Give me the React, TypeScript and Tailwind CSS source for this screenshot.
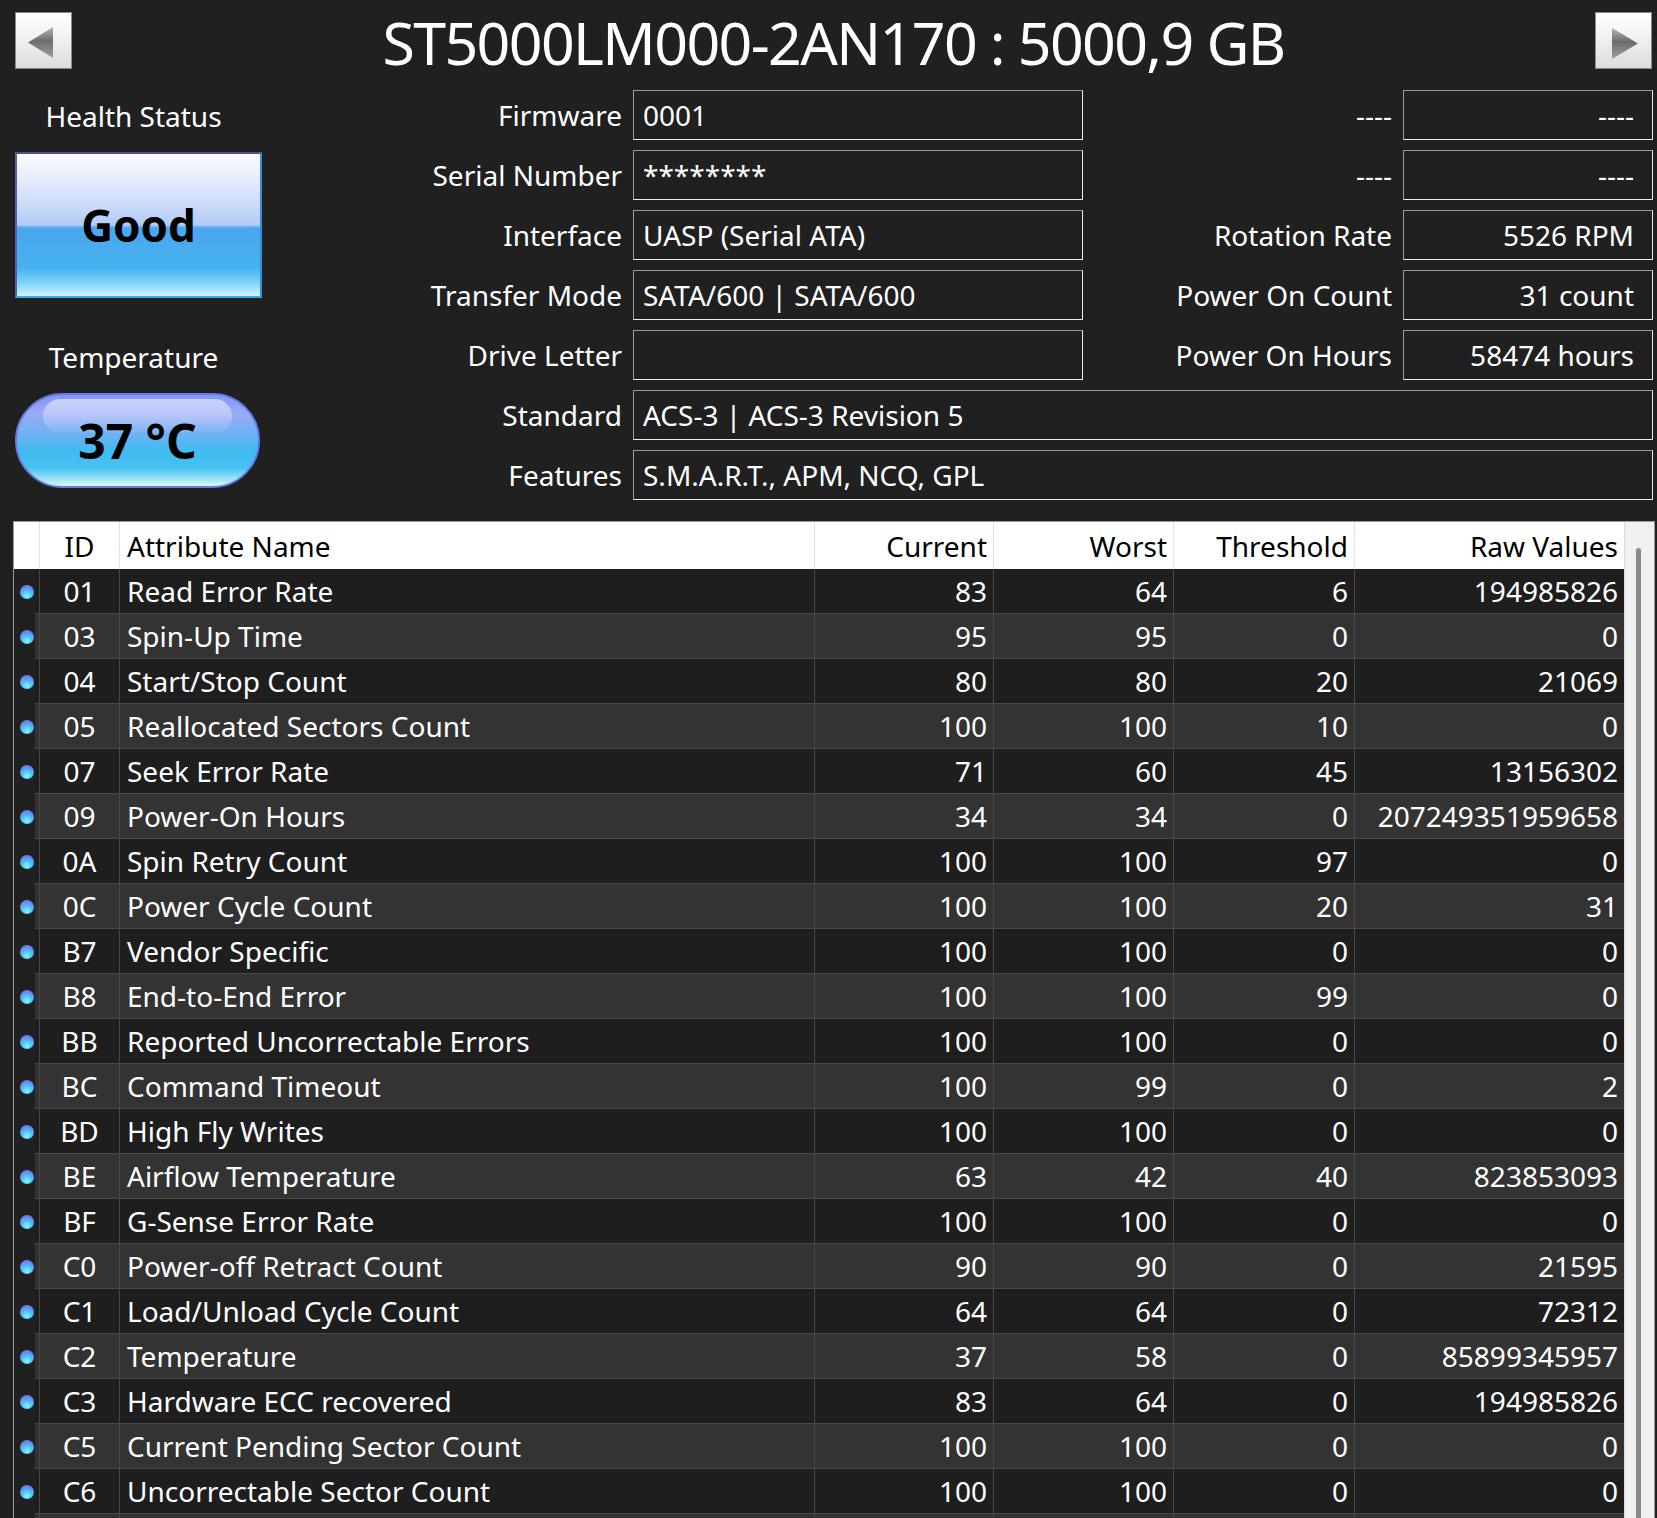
import React from "react";

type Attr = { id: string; name: string; cur: string; worst: string; thr: string; raw: string };

const attrs: Attr[] = [
  { id: "01", name: "Read Error Rate", cur: "83", worst: "64", thr: "6", raw: "194985826" },
  { id: "03", name: "Spin-Up Time", cur: "95", worst: "95", thr: "0", raw: "0" },
  { id: "04", name: "Start/Stop Count", cur: "80", worst: "80", thr: "20", raw: "21069" },
  { id: "05", name: "Reallocated Sectors Count", cur: "100", worst: "100", thr: "10", raw: "0" },
  { id: "07", name: "Seek Error Rate", cur: "71", worst: "60", thr: "45", raw: "13156302" },
  { id: "09", name: "Power-On Hours", cur: "34", worst: "34", thr: "0", raw: "207249351959658" },
  { id: "0A", name: "Spin Retry Count", cur: "100", worst: "100", thr: "97", raw: "0" },
  { id: "0C", name: "Power Cycle Count", cur: "100", worst: "100", thr: "20", raw: "31" },
  { id: "B7", name: "Vendor Specific", cur: "100", worst: "100", thr: "0", raw: "0" },
  { id: "B8", name: "End-to-End Error", cur: "100", worst: "100", thr: "99", raw: "0" },
  { id: "BB", name: "Reported Uncorrectable Errors", cur: "100", worst: "100", thr: "0", raw: "0" },
  { id: "BC", name: "Command Timeout", cur: "100", worst: "99", thr: "0", raw: "2" },
  { id: "BD", name: "High Fly Writes", cur: "100", worst: "100", thr: "0", raw: "0" },
  { id: "BE", name: "Airflow Temperature", cur: "63", worst: "42", thr: "40", raw: "823853093" },
  { id: "BF", name: "G-Sense Error Rate", cur: "100", worst: "100", thr: "0", raw: "0" },
  { id: "C0", name: "Power-off Retract Count", cur: "90", worst: "90", thr: "0", raw: "21595" },
  { id: "C1", name: "Load/Unload Cycle Count", cur: "64", worst: "64", thr: "0", raw: "72312" },
  { id: "C2", name: "Temperature", cur: "37", worst: "58", thr: "0", raw: "85899345957" },
  { id: "C3", name: "Hardware ECC recovered", cur: "83", worst: "64", thr: "0", raw: "194985826" },
  { id: "C5", name: "Current Pending Sector Count", cur: "100", worst: "100", thr: "0", raw: "0" },
  { id: "C6", name: "Uncorrectable Sector Count", cur: "100", worst: "100", thr: "0", raw: "0" },
  // next row is only a sliver at the bottom edge
  { id: "", name: "", cur: "", worst: "", thr: "", raw: "" },
];

function ArrowButton({ dir }: { dir: "left" | "right" }) {
  const gid = `tri-${dir}`;
  return (
    <button className="w-[57px] h-[57px] border border-[#8a8a8a] bg-[linear-gradient(180deg,#ffffff_0%,#f3f3f3_40%,#dcdcdc_100%)] flex items-center justify-center">
      <svg width="55" height="55" viewBox="0 0 55 55">
        <defs>
          <linearGradient id={gid} x1="0" y1="0" x2="0" y2="1">
            <stop offset="0" stopColor="#b4b4b4" />
            <stop offset="0.45" stopColor="#6c6c6c" />
            <stop offset="1" stopColor="#a0a0a0" />
          </linearGradient>
        </defs>
        {dir === "left" ? (
          <polygon points="12,29.5 37,14 37,45" fill={`url(#${gid})`} />
        ) : (
          <polygon points="16,15 16,46 42,30.5" fill={`url(#${gid})`} />
        )}
      </svg>
    </button>
  );
}

function Field({ value, right }: { value: string; right?: boolean }) {
  return (
    <div
      className={`h-[50px] border border-t-[#9a9a9a] border-l-[#9a9a9a] border-b-[#ececec] border-r-[#ececec] flex items-center ${
        right ? "justify-end pr-[18px]" : "pl-[9px]"
      }`}
    >
      {value}
    </div>
  );
}

function Label({ text }: { text: string }) {
  return <div className="h-[50px] flex items-center justify-end">{text}</div>;
}

function Bullet() {
  return (
    <div className="ml-[6px] w-[14px] h-[14px] rounded-full bg-[radial-gradient(circle_at_50%_78%,#8af4ff_0%,#4cc4fb_38%,#6a80f2_72%,#7b68e2_100%)]" />
  );
}

export default function App() {
  return (
    <div className="w-[1657px] h-[1518px] overflow-hidden bg-[#202020] text-white font-['Noto_Sans',sans-serif] text-[28px] leading-[38px]">
      {/* header */}
      <div className="h-[90px] flex items-start">
        <div className="mt-[12px] ml-[15px]">
          <ArrowButton dir="left" />
        </div>
        <div className="flex-1 text-center mt-[6px] text-[59px] leading-[72px] tracking-[-1.6px]">ST5000LM000-2AN170 : 5000,9 GB</div>
        <div className="mt-[12px] mr-[5px]">
          <ArrowButton dir="right" />
        </div>
      </div>

      {/* info */}
      <div className="flex">
        <div className="ml-[15px] w-[247px] flex flex-col">
          <div className="mt-[7px] w-[237px] text-center">Health Status</div>
          <div className="mt-[17px] h-[146px] w-[247px] border-2 border-t-[#4b4d9e] border-l-[#4a62b8] border-r-[#3c8ed0] border-b-[#38aee0] bg-[linear-gradient(180deg,#fbfbff_0%,#e2e8fc_22%,#b3cbf7_50%,#4ba6ee_52%,#45b2ee_80%,#82d4f6_91%,#d2f3fd_100%)] flex items-center justify-center">
            <span className="text-black font-bold text-[44px] leading-[50px]">Good</span>
          </div>
          <div className="mt-[40px] w-[237px] text-center">Temperature</div>
          <div className="mt-[17px] relative h-[95px] w-[245px] rounded-full border-2 border-[#6777e6] bg-[linear-gradient(180deg,#8595f4_0%,#9aaaf6_20%,#6cb2f3_44%,#3fbcf0_62%,#47c1f1_80%,#a8e6fa_94%,#e0f8fe_100%)] flex items-center justify-center overflow-hidden">
            <div className="absolute top-[4px] left-[26px] right-[26px] h-[34px] rounded-full bg-[linear-gradient(180deg,rgba(255,255,255,0.55),rgba(255,255,255,0.05))]" />
            <span className="relative text-black font-bold text-[48px] leading-[56px]">37 °C</span>
          </div>
        </div>

        <div className="w-[1391px] grid grid-cols-[360px_450px_298px_250px] gap-x-[11px] gap-y-[10px]">
          <Label text="Firmware" />
          <Field value="0001" />
          <Label text="----" />
          <Field value="----" right />

          <Label text="Serial Number" />
          <Field value="********" />
          <Label text="----" />
          <Field value="----" right />

          <Label text="Interface" />
          <Field value="UASP (Serial ATA)" />
          <Label text="Rotation Rate" />
          <Field value="5526 RPM" right />

          <Label text="Transfer Mode" />
          <Field value="SATA/600 | SATA/600" />
          <Label text="Power On Count" />
          <Field value="31 count" right />

          <Label text="Drive Letter" />
          <Field value="" />
          <Label text="Power On Hours" />
          <Field value="58474 hours" right />

          <Label text="Standard" />
          <div className="col-span-3">
            <Field value="ACS-3 | ACS-3 Revision 5" />
          </div>

          <Label text="Features" />
          <div className="col-span-3">
            <Field value="S.M.A.R.T., APM, NCQ, GPL" />
          </div>
        </div>
      </div>

      {/* table */}
      <div className="mt-[21px] ml-[13px] mr-[2px] border-t border-l border-r border-[#9c9c9c] flex">
        <div className="w-[1610px] flex flex-col">
          <div className="h-[47px] bg-white text-black flex items-center">
            <div className="w-[25px] h-full" />
            <div className="w-[80px] h-full border-l border-[#e2e2e2] flex items-center justify-center">ID</div>
            <div className="w-[695px] h-full border-l border-[#e2e2e2] flex items-center pl-[7px]">Attribute Name</div>
            <div className="w-[179px] h-full border-l border-[#e2e2e2] flex items-center justify-end pr-[6px]">Current</div>
            <div className="w-[180px] h-full border-l border-[#e2e2e2] flex items-center justify-end pr-[6px]">Worst</div>
            <div className="w-[181px] h-full border-l border-[#e2e2e2] flex items-center justify-end pr-[6px]">Threshold</div>
            <div className="w-[270px] h-full border-l border-[#e2e2e2] flex items-center justify-end pr-[6px]">Raw Values</div>
          </div>
          {attrs.map((a, i) => (
            <div key={i} className="h-[45px] flex">
              <div className="w-[21px] flex items-center">{a.id && <Bullet />}</div>
              <div
                className={`flex-1 flex border-b border-[#474747] ${i % 2 === 1 ? "bg-[#333333]" : "bg-[#1e1e1e]"}`}
              >
                <div className="w-[4px]" />
                <div className="w-[80px] border-l border-[#474747] flex items-center justify-center">{a.id}</div>
                <div className="w-[695px] border-l border-[#474747] flex items-center pl-[7px]">{a.name}</div>
                <div className="w-[179px] border-l border-[#474747] flex items-center justify-end pr-[6px]">{a.cur}</div>
                <div className="w-[180px] border-l border-[#474747] flex items-center justify-end pr-[6px]">{a.worst}</div>
                <div className="w-[181px] border-l border-[#474747] flex items-center justify-end pr-[6px]">{a.thr}</div>
                <div className="w-[270px] border-l border-[#474747] flex items-center justify-end pr-[6px]">{a.raw}</div>
              </div>
            </div>
          ))}
        </div>
        <div className="flex-1 bg-[#f0f0f0] border-l border-[#dadada]">
          <div className="mt-[26px] ml-[11px] w-[5px] h-[1200px] rounded-full bg-[#8a8a8a]" />
        </div>
      </div>
    </div>
  );
}
